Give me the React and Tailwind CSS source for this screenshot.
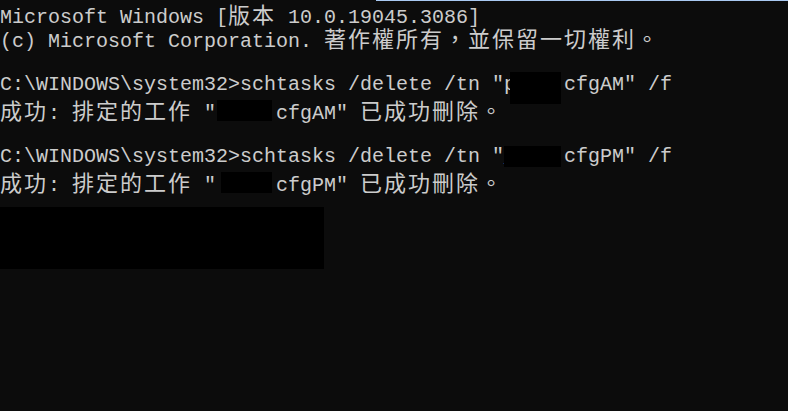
import React from 'react';

const C = ({ children }) => (
  <span className="text-[22px] leading-[24px] tracking-[2px] [font-family:'Noto_Sans_CJK_TC','Noto_Sans_CJK_JP',sans-serif]">
    {children}
  </span>
);

const Line = ({ children }) => (
  <div className="relative h-[24px] leading-[24px] whitespace-pre">{children}</div>
);

const Redact = ({ className }) => <div className={'absolute bg-black ' + className} />;

const App = () => {
  return (
    <div className="relative w-[788px] h-[411px] overflow-hidden bg-[#0c0c0c] text-[#cccccc] text-[20px] [font-family:'Liberation_Mono',monospace] pt-[1px]">
      <div className="absolute top-0 right-0 h-px w-[412px] bg-[#a9c9f2]" />

      <Line>
        Microsoft Windows [<C>版本</C> 10.0.19045.3086]
      </Line>
      <Line>
        (c) Microsoft Corporation. <C>著作權所有，並保留一切權利。</C>
      </Line>
      <Line> </Line>
      <Line>
        {'C:\\WINDOWS\\system32>schtasks /delete /tn "p    cfgAM" /f'}
        <Redact className="left-[510px] top-[-1px] w-[51px] h-[32px]" />
      </Line>
      <Line>
        <C>成功</C>: <C>排定的工作</C> {'"     cfgAM" '}
        <C>已成功刪除。</C>
        <Redact className="left-[217px] top-[3px] w-[55px] h-[21px]" />
      </Line>
      <Line> </Line>
      <Line>
        {'C:\\WINDOWS\\system32>schtasks /delete /tn "_    cfgPM" /f'}
        <Redact className="left-[504px] top-[1px] w-[57px] h-[21px]" />
      </Line>
      <Line>
        <C>成功</C>: <C>排定的工作</C> {'"     cfgPM" '}
        <C>已成功刪除。</C>
        <Redact className="left-[221px] top-[3px] w-[51px] h-[21px]" />
      </Line>

      <div className="mt-[14px] w-[324px] h-[62px] bg-black" />
    </div>
  );
};

export default App;
